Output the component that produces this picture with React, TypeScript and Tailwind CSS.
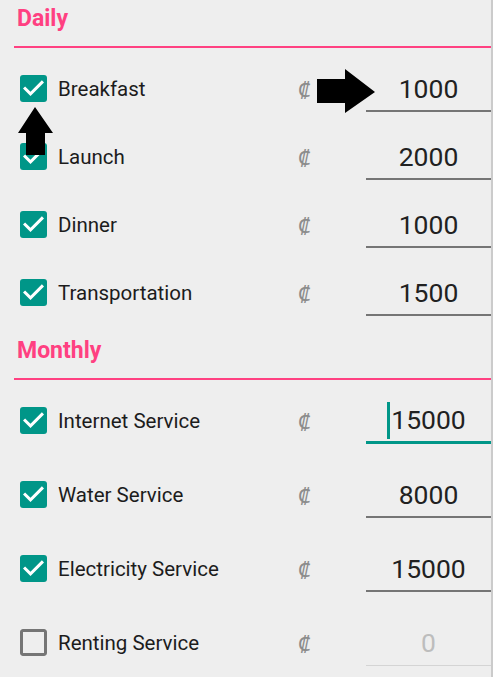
import React from 'react';

type Item = { label: string; value: string; checked: boolean; focused?: boolean };

const daily: Item[] = [
  { label: 'Breakfast', value: '1000', checked: true },
  { label: 'Launch', value: '2000', checked: true },
  { label: 'Dinner', value: '1000', checked: true },
  { label: 'Transportation', value: '1500', checked: true },
];

const monthly: Item[] = [
  { label: 'Internet Service', value: '15000', checked: true, focused: true },
  { label: 'Water Service', value: '8000', checked: true },
  { label: 'Electricity Service', value: '15000', checked: true },
  { label: 'Renting Service', value: '0', checked: false },
];

const CheckBox: React.FC<{ checked: boolean }> = ({ checked }) => (
  <svg width="27" height="27" viewBox="3 3 18 18" className="shrink-0">
    {checked ? (
      <>
        <rect x="3" y="3" width="18" height="18" rx="2" fill="#009688" />
        <path d="M10 17l-5-5 1.41-1.41L10 14.17l7.59-7.59L19 8l-9 9z" fill="#ffffff" />
      </>
    ) : (
      <path
        d="M19 5v14H5V5h14m0-2H5c-1.1 0-2 .9-2 2v14c0 1.1.9 2 2 2h14c1.1 0 2-.9 2-2V5c0-1.1-.9-2-2-2z"
        fill="#757575"
      />
    )}
  </svg>
);

const Row: React.FC<{ item: Item; tall?: boolean }> = ({ item, tall }) => {
  const disabled = !item.checked;
  let underline = 'border-b-2 border-[#757575]';
  if (item.focused) underline = 'border-b-[3px] border-[#009688]';
  if (disabled) underline = 'border-b border-[#d4d4d4]';

  return (
    <div className={`flex items-center ${tall ? 'h-[74px]' : 'h-[68px]'}`}>
      <div className="pl-[20px] w-[58px] flex items-center">
        <CheckBox checked={item.checked} />
      </div>
      <span className="mt-[3px] w-[240px] text-[20.5px] text-[#1c1c1c]">{item.label}</span>
      <span className="w-[68px] mt-[3px] text-[22px] text-[#8c8c8c]">₡</span>
      <div className={`mt-[3px] flex-1 h-[44px] flex items-center justify-center ${underline}`}>
        {item.focused && <span className="w-[3px] h-[37px] bg-[#009688] mr-[1px] mt-[1px]" />}
        <span className={`text-[26.5px] ${disabled ? 'text-[#bdbdbd]' : 'text-[#212121]'} ${item.focused ? 'mr-[4px]' : ''}`}>
          {item.value}
        </span>
      </div>
    </div>
  );
};

const Header: React.FC<{ title: string }> = ({ title }) => (
  <div>
    <div className="pl-[17px] text-[23px] leading-[28px] font-bold text-[#ff4081]">{title}</div>
    <div className="ml-[14px] h-[2px] bg-[#ff4081] mt-[13px]" />
  </div>
);

export default function App() {
  return (
    <div
      className="relative w-[493px] h-[677px] overflow-hidden bg-[#eeeeee] border-r-2 border-[#cbcbcb]"
      style={{ fontFamily: 'Roboto, "Noto Sans", "DejaVu Sans", sans-serif' }}
    >
      <div className="pt-[5px]">
        <Header title="Daily" />
      </div>
      <div className="mt-[6px]">
        {daily.map((it) => (
          <Row key={it.label} item={it} />
        ))}
      </div>
      <div className="mt-[11px]">
        <Header title="Monthly" />
      </div>
      <div className="mt-[3px]">
        {monthly.map((it) => (
          <Row key={it.label} item={it} tall />
        ))}
      </div>

      {/* annotation arrows */}
      <svg className="absolute left-[18px] top-[107px]" width="36" height="49" viewBox="0 0 36 49">
        <polygon points="17,0 35,26 27,26 27,48 8,48 8,26 0,26" fill="#000" />
      </svg>
      <svg className="absolute left-[317px] top-[69px]" width="59" height="45" viewBox="0 0 59 45">
        <polygon points="0,10 28,10 28,0 58,23 28,44 28,34 0,34" fill="#000" />
      </svg>
    </div>
  );
}
